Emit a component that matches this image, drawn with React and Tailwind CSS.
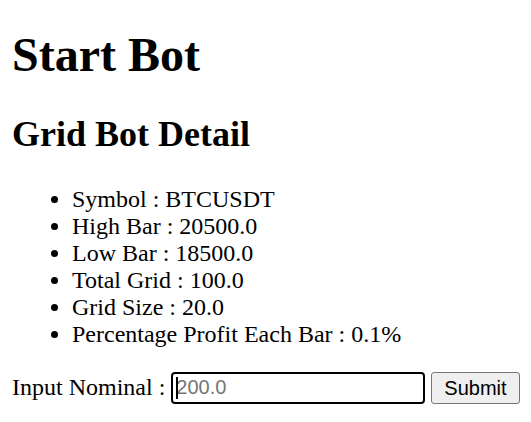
export default function App() {
  return (
    <div className="min-h-[422px] bg-white px-[12px] pt-px text-black">
      <div className="-mt-px font-['Liberation_Serif',serif] text-[24px] leading-[1.15]">
        <h1 className="mt-[27px] mb-[32px] text-[48px] font-bold leading-[1.15]">Start Bot</h1>
        <h2 className="mt-[30px] mb-[30px] text-[36px] font-bold leading-[1.15]">Grid Bot Detail</h2>
        <ul className="my-[24px] list-disc pl-[60px] leading-[27px]">
          <li>Symbol : BTCUSDT</li>
          <li>High Bar : 20500.0</li>
          <li>Low Bar : 18500.0</li>
          <li>Total Grid : 100.0</li>
          <li>Grid Size : 20.0</li>
          <li>Percentage Profit Each Bar : 0.1%</li>
        </ul>
        <div className="flex items-center whitespace-nowrap">
          <span className="shrink-0">Input Nominal :&nbsp;</span>
          <div className="relative shrink-0">
            <input
              type="text"
              placeholder="200.0"
              className="h-[32px] w-[254px] rounded-[4px] border-2 border-black px-[3px] font-['Liberation_Sans',sans-serif] text-[20px] text-black outline-none placeholder:text-[#757575]"
            />
            <span className="pointer-events-none absolute left-[5px] top-[5px] h-[22px] w-[2px] bg-black" />
          </div>
          <button className="ml-[6px] h-[32px] shrink-0 rounded-[3px] border border-[#767676] bg-[#efefef] px-[12px] font-['Liberation_Sans',sans-serif] text-[20px] leading-none text-black">
            Submit
          </button>
        </div>
      </div>
    </div>
  );
}
